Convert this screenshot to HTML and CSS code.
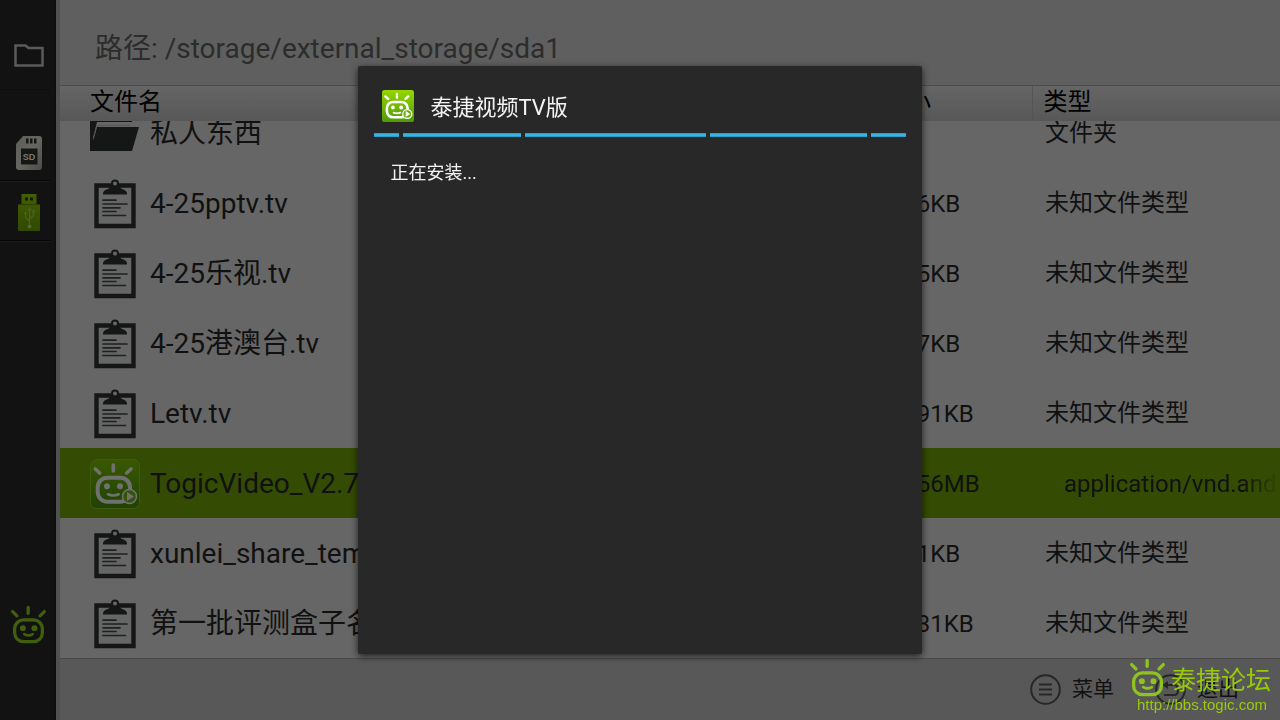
FILE: index.html
```html
<!DOCTYPE html>
<html lang="zh-CN">
<head>
<meta charset="utf-8">
<title>泰捷视频TV版</title>
<link rel="stylesheet" href="styles.css">
</head>
<body>
<svg class="defs" aria-hidden="true">
  <defs>
    <linearGradient id="bright" x1="0" y1="0" x2="0" y2="1"><stop offset="0" stop-color="#96d600"/><stop offset="1" stop-color="#4f9a08"/></linearGradient>
    <linearGradient id="dark" x1="0" y1="0" x2="0" y2="1"><stop offset="0" stop-color="#3a5800"/><stop offset="1" stop-color="#1f4204"/></linearGradient>
    <linearGradient id="card" x1="0" y1="0" x2="1" y2="1"><stop offset="0" stop-color="#5c5d56"/><stop offset="0.5" stop-color="#666760"/><stop offset="1" stop-color="#4b4c46"/></linearGradient>
    <linearGradient id="stick" x1="0" y1="0" x2="0" y2="1"><stop offset="0" stop-color="#425f00"/><stop offset="1" stop-color="#304900"/></linearGradient>
  </defs>
  <symbol id="robot" viewBox="30 30 112 118">
    <g fill="none" stroke="currentColor" stroke-width="10" stroke-linecap="round">
      <path d="M85 37v18M38 50l13 13M134 50l-13 13"/>
      <rect x="44" y="75" width="84" height="66" rx="27"/>
      <path d="M73 118q13 8 26 0" stroke-width="8"/>
    </g>
    <circle cx="69" cy="100" r="9" fill="currentColor"/><circle cx="104" cy="100" r="9" fill="currentColor"/>
  </symbol>
  <symbol id="face" viewBox="30 23 150 150">
    <g fill="none" stroke="currentColor" stroke-width="12" stroke-linecap="round">
      <path d="M100 41v18M46 53l13 12M153 53l-13 12" stroke-width="11"/>
      <rect x="53" y="79" width="97" height="72" rx="29"/>
      <path d="M84 129q16 7 32 0" stroke-width="8"/>
    </g>
    <circle cx="81" cy="105" r="9" fill="currentColor"/><circle cx="120" cy="105" r="9" fill="currentColor"/>
  </symbol>
  <symbol id="clipboard" viewBox="0 0 42 50">
    <path d="M2.500 6.500h37v40.500h-37z" fill="none" stroke="#151716" stroke-width="4.400"/>
    <path d="M9 15.500V14c1-4 6-3 8-7h8c2 4 7 3 8 7v1.500z" fill="#151716"/>
    <circle cx="21" cy="4.500" r="3" fill="#666" stroke="#151716" stroke-width="2"/>
    <path d="M9 21.200h13M9 25h24M9 28.800h17M9 32.500h13M9 36.500h22.500" stroke="#1f2120" stroke-width="1.700" stroke-linecap="round"/>
  </symbol>
</svg>

<div class="app">
  <nav class="sidebar" aria-label="存储设备">
    <button class="side-item side-top" aria-label="本地文件">
      <svg width="30" height="23" viewBox="0 0 30 23"><path d="M1.500 1.500h10l3 2.500h14v17.500h-27z" fill="none" stroke="#5b5b5b" stroke-width="2.500"/></svg>
    </button>
    <button class="side-item" aria-label="SD">
      <svg width="26" height="34" viewBox="0 0 26 34">
        <path d="M7 0h16q3 0 3 3v28q0 3-3 3H3q-3 0-3-3V8z" fill="url(#card)"/>
        <path d="M10 2.500h2.500v5H10zM14 2.500h2.500v5H14zM18 2.500h2.500v5H18zM5 12.500h16.500v16H5z" fill="#161616"/>
        <text x="13" y="23.500" class="sd-label" text-anchor="middle">SD</text>
      </svg>
    </button>
    <button class="side-item" aria-label="USB">
      <svg width="22" height="37" viewBox="0 0 22 37">
        <path d="M3.500 0h15v10.500H22V36q0 1-1 1H1q-1 0-1-1V10.500h3.500z" fill="url(#stick)"/>
        <path d="M7 3.500h3v3H7zM12 3.500h3v3h-3z" fill="#141a00"/>
        <path d="M3.500 10.500h15" stroke="#2c4000"/>
        <path d="M11.500 15v16M11.500 27l-4-3.500v-4M11.500 25l4-3.500v-4" fill="none" stroke="#4f5f28" stroke-width="1.200"/>
        <circle cx="11.500" cy="32.500" r="2" fill="#56643a"/><circle cx="7.500" cy="19" r="1.300" fill="#4f5f28"/><path d="M9.500 16.500l2-3.500 2 3.500zM14.300 16h2.500v2.500h-2.500z" fill="#4f5f28"/>
      </svg>
    </button>
    <button class="side-item side-home" aria-label="泰捷"><svg width="37" height="39"><use href="#robot"/></svg></button>
  </nav>

  <main class="main">
    <header class="path">路径: /storage/external_storage/sda1</header>

    <div class="listing">
      <table class="files">
        <colgroup><col><col class="col-size"><col class="col-type"></colgroup>
        <thead>
          <tr><th class="name" scope="col">文件名</th><th class="size" scope="col">大小</th><th class="type" scope="col">类型</th></tr>
        </thead>
        <tbody>
          <tr class="partial">
            <td><div class="clip"><div class="file"><span class="icon"><svg width="50" height="38" viewBox="0 0 50 38"><path d="M0 34V0h17l2 3h23v4H7L3 23z" fill="#151716"/><path d="M0 36V0h3v36zM7 12h42l-7 24H0z" fill="#151716"/><path d="M3.500 23L7 10.500h33" fill="none" stroke="#555"/></svg></span>私人东西</div></div></td>
            <td></td>
            <td class="type"><div class="clip"><div class="file">文件夹</div></div></td>
          </tr>
          <tr><td><div class="file"><span class="icon"><svg width="42" height="50"><use href="#clipboard"/></svg></span>4-25pptv.tv</div></td><td class="size">1.6KB</td><td class="type">未知文件类型</td></tr>
          <tr><td><div class="file"><span class="icon"><svg width="42" height="50"><use href="#clipboard"/></svg></span>4-25乐视.tv</div></td><td class="size">1.5KB</td><td class="type">未知文件类型</td></tr>
          <tr><td><div class="file"><span class="icon"><svg width="42" height="50"><use href="#clipboard"/></svg></span>4-25港澳台.tv</div></td><td class="size">1.7KB</td><td class="type">未知文件类型</td></tr>
          <tr><td><div class="file"><span class="icon"><svg width="42" height="50"><use href="#clipboard"/></svg></span>Letv.tv</div></td><td class="size">1.91KB</td><td class="type">未知文件类型</td></tr>
          <tr class="selected">
            <td><div class="file"><span class="icon"><svg class="dim-face" width="50" height="50" viewBox="0 0 50 50">
              <rect x="0.500" y="0.500" width="49" height="49" rx="6" fill="url(#dark)" stroke="#3f5c0c"/>
              <use href="#face" width="50" height="50"/>
              <circle cx="39.500" cy="37.500" r="7" fill="#34540c" stroke="currentColor" stroke-width="1.500"/><path d="M37 33l7 4.500-7 4.500z" fill="currentColor"/>
            </svg></span>TogicVideo_V2.7</div></td>
            <td class="size">7.56MB</td>
            <td class="mime">application/vnd.and</td>
          </tr>
          <tr><td><div class="file"><span class="icon"><svg width="42" height="50"><use href="#clipboard"/></svg></span>xunlei_share_tem</div></td><td class="size">1.1KB</td><td class="type">未知文件类型</td></tr>
          <tr><td><div class="file"><span class="icon"><svg width="42" height="50"><use href="#clipboard"/></svg></span>第一批评测盒子名</div></td><td class="size">1.31KB</td><td class="type">未知文件类型</td></tr>
        </tbody>
      </table>
    </div>

    <footer class="footer">
      <button class="action"><svg width="31" height="31" viewBox="0 0 31 31" fill="none" stroke="#272727"><circle cx="15.500" cy="15.500" r="14.300" stroke-width="2"/><path d="M9 10.500h13M9 15.500h13M9 20.500h13" stroke-width="2.200"/></svg>菜单</button>
      <button class="action"><svg width="31" height="31" viewBox="0 0 31 31" fill="none" stroke="#272727"><circle cx="15.500" cy="15.500" r="14.300" stroke-width="2"/><path d="M10 11h9q4 0 4 5t-4 5h-10" stroke-width="2"/><path d="M13 7v8l-6-4z" fill="#272727" stroke="none"/></svg>退出</button>
    </footer>
  </main>
</div>

<div class="overlay">
  <section class="dialog" role="dialog" aria-labelledby="dialog-title">
    <div class="dialog-head">
      <svg class="bright-face" width="32" height="32" viewBox="0 0 50 50">
        <rect width="50" height="50" rx="4" fill="url(#bright)"/>
        <use href="#face" width="50" height="50"/>
        <circle cx="39.500" cy="37.500" r="7" fill="#6cae12" stroke="currentColor" stroke-width="2"/><path d="M37 33l7 4.500-7 4.500z" fill="currentColor"/>
      </svg>
      <h1 id="dialog-title">泰捷视频TV版</h1>
    </div>
    <div class="progress" role="progressbar" aria-label="正在安装">
      <span class="seg seg-a"></span><span class="seg seg-b"></span><span class="seg seg-c"></span><span class="seg seg-d"></span><span class="seg seg-e"></span>
    </div>
    <p>正在安装...</p>
  </section>
</div>

<aside class="watermark">
  <svg class="mark" width="37" height="39"><use href="#robot"/></svg>
  <div class="mark-name">泰捷论坛</div>
  <a class="mark-link" href="http://bbs.togic.com">http://bbs.togic.com</a>
</aside>
</body>
</html>
```
FILE: styles.css
```css
* { box-sizing: border-box; }
body {
  margin: 0;
  height: 100vh;
  overflow: hidden;
  background: #666;
  color: #111;
  font-family: Roboto, "Noto Sans CJK SC", sans-serif;
}
svg { display: block; flex: none; }
button { border: 0; padding: 0; background: none; color: inherit; font: inherit; }
.defs { position: absolute; width: 0; height: 0; }
.app { display: flex; height: 100%; }

.sidebar {
  display: flex;
  flex-direction: column;
  flex: none;
  width: 60px;
  padding: 20px 0 68px;
  border-right: 4px solid #515151;
  background: linear-gradient(90deg, #121212 54px, #0d0d0d 56px);
}
.side-item {
  display: grid;
  place-items: center;
  height: 60px;
  width: 50px;
  padding: 4px 0 0 8px;
  border-bottom: 1px solid #050505;
  box-shadow: 0 1px #1c1c1c;
}
.side-top { height: 70px; padding-top: 2px; margin-bottom: 31px; box-shadow: none; border-color: #0e0e0e; }
.side-home { margin-top: auto; padding-left: 7px; border: 0; box-shadow: none; color: #3f5f0c; }
.sd-label { font: bold 9px "Liberation Sans", sans-serif; fill: #777870; }

.main { display: flex; flex-direction: column; flex: 1; min-width: 0; }
.path {
  flex: none;
  height: 86px;
  padding: 11px 35px 0;
  border-bottom: 1px solid #4b4b4b;
  background: #5f5f5f;
  color: #2c2c2c;
  font-size: 28px;
  line-height: 76px;
}
.listing { flex: 1; min-height: 0; overflow: hidden; }
.files { width: 100%; table-layout: fixed; border-collapse: collapse; font-size: 24px; line-height: 32px; }
.col-size { width: 151px; }
.col-type { width: 248px; }
th {
  height: 35px;
  padding: 0 0 2px;
  background: linear-gradient(#656565, #585858);
  color: #000;
  font-weight: 400;
  text-align: left;
  line-height: 33px;
}
th.name { padding-left: 30px; }
th.size { padding-left: 2px; }
th.type { padding-left: 11px; border-left: 1px solid #555; }
td { height: 70px; padding: 0; white-space: nowrap; overflow: hidden; }
td.size { padding: 2px 0 0 16px; }
td.type { padding: 0 0 0 13px; }
td.mime {
  padding: 2px 0 0 32px;
  background: linear-gradient(90deg, #111 85%, #344b03) text;
  color: transparent;
}
.partial td { height: 47px; }
.clip { display: flex; align-items: flex-end; height: 47px; overflow: hidden; }
.file { display: flex; align-items: center; height: 70px; padding-top: 2px; font-size: 28px; }
td.type .file { padding-top: 0; font-size: 24px; }
.icon { display: grid; place-items: center; width: 50px; margin: 0 10px 0 30px; }
.selected { background: #344b03; }
.dim-face { color: #707070; }

.footer {
  display: flex;
  flex: none;
  justify-content: flex-end;
  align-items: center;
  gap: 41px;
  height: 62px;
  padding-right: 41px;
  border-top: 1px solid #494949;
  background: #585858;
}
.action { display: flex; align-items: center; gap: 11px; font-size: 21px; line-height: 31px; }

.overlay { position: fixed; inset: 0; display: grid; place-items: center; }
.dialog {
  width: 44%;
  height: calc(100% - 132px);
  padding: 24px 16px;
  border-radius: 2px;
  background: #282828;
  box-shadow: 0 2px 7px rgba(0, 0, 0, 0.7);
  color: #f3f3f3;
}
.dialog-head { display: flex; align-items: center; gap: 16px; height: 32px; padding-left: 8px; }
.bright-face { color: #fff; }
h1 { margin: 0; padding-bottom: 3px; font-size: 22px; font-weight: 400; }
.progress { display: flex; gap: 4px; margin-top: 11px; height: 4px; }
.seg { background: linear-gradient(#2a85a8, #33b5e5 1px, #33b5e5 3px, #2a85a8); }
.seg-a { flex: 25; }
.seg-b { flex: 118; }
.seg-c { flex: 181; }
.seg-d { flex: 157; }
.seg-e { flex: 35; }
p { margin: 22px 16px; font-size: 18px; line-height: 28px; }

.watermark {
  position: fixed;
  right: 9px;
  bottom: 7px;
  display: grid;
  grid-template-columns: 42px auto;
  color: #98ca0a;
}
.mark { color: #8fc31f; grid-row: 1; }
.mark-name { padding-top: 6px; font-size: 25px; font-weight: 400; line-height: 33px; }
.mark-link {
  grid-column: 1 / 3;
  padding-left: 8px;
  color: inherit;
  font: 15px/16px "Liberation Sans", sans-serif;
  text-decoration: none;
}
```
